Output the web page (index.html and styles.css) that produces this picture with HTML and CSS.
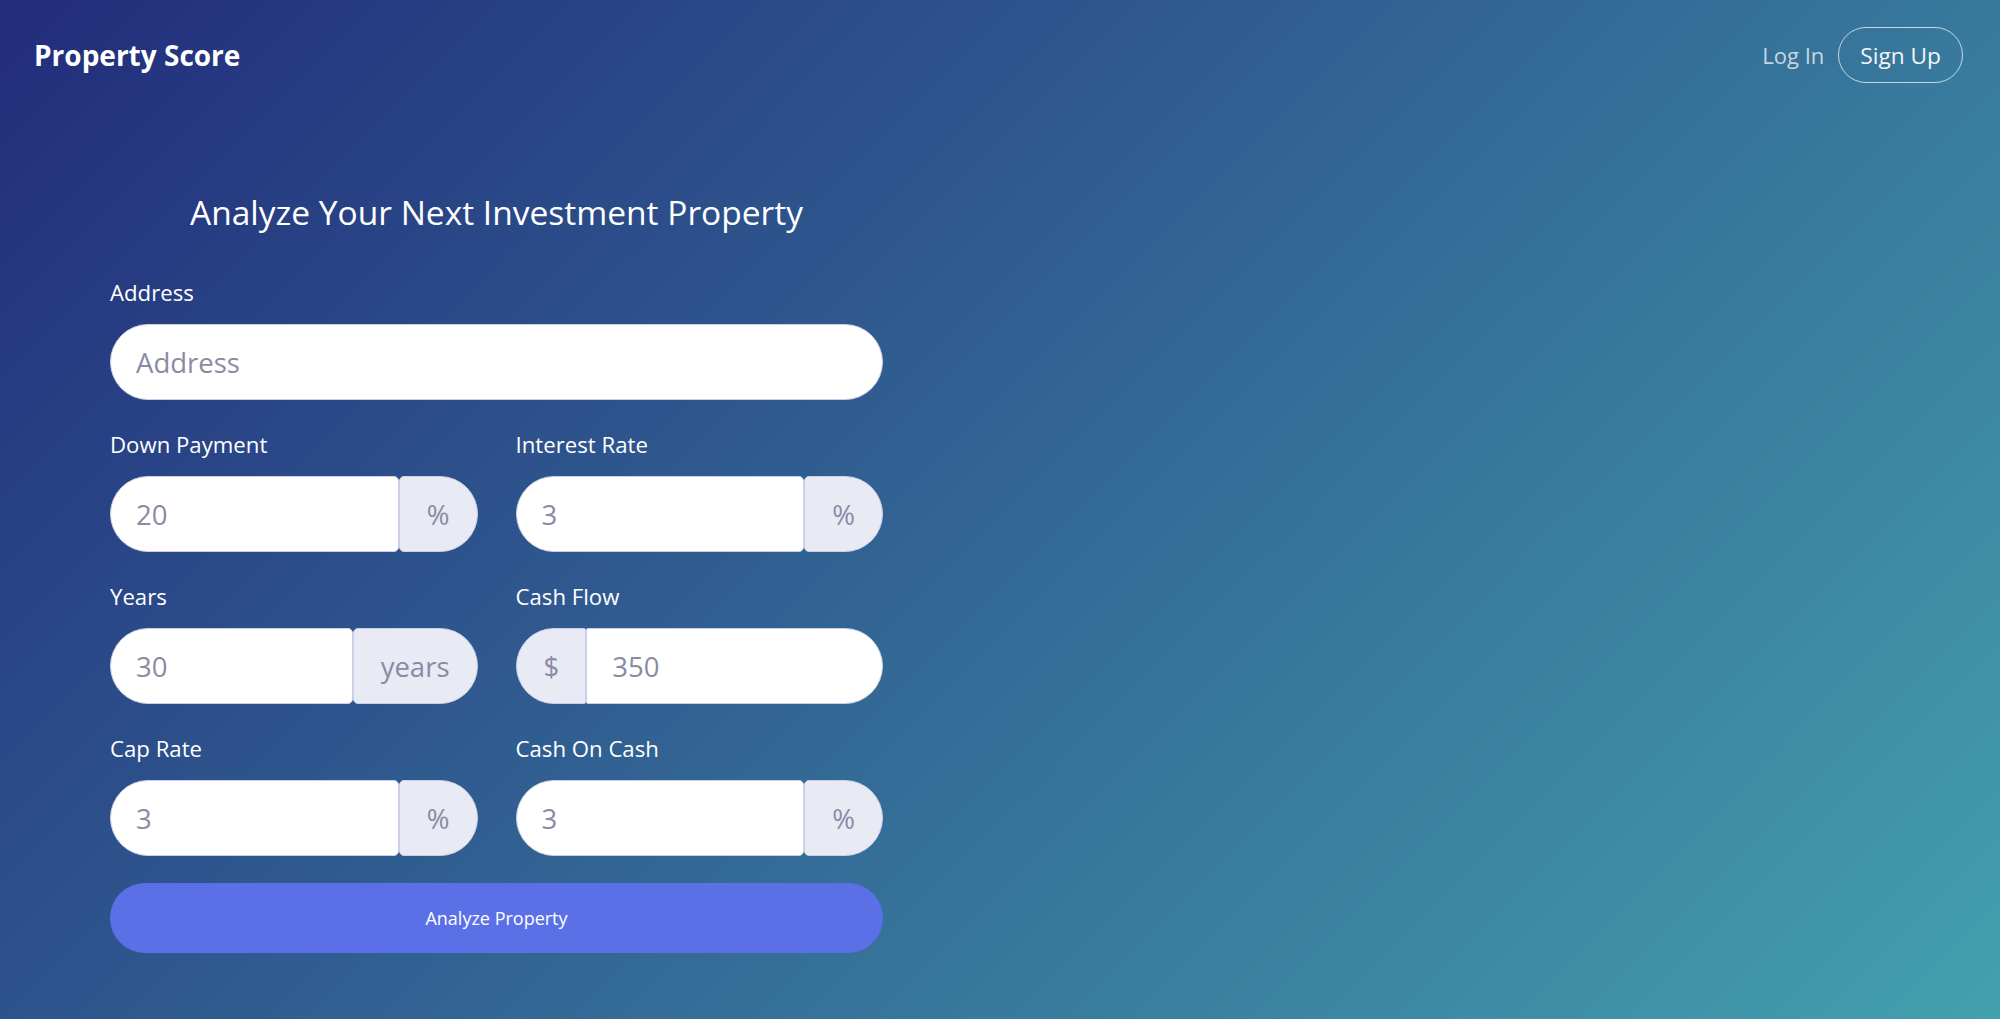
FILE: index.html
```html
<!DOCTYPE html>
<html lang="en">
<head>
<meta charset="utf-8">
<title>Property Score</title>
<link rel="stylesheet" href="styles.css">
</head>
<body>
<header class="topbar">
  <div class="brand">Property Score</div>
  <nav class="nav">
    <a class="nav-link" href="#">Log In</a>
    <a class="nav-btn" href="#">Sign Up</a>
  </nav>
</header>

<main class="main">
  <section class="panel">
    <h1 class="title">Analyze Your Next Investment Property</h1>
    <form class="form">
      <div class="field field-wide">
        <label class="label">Address</label>
        <div class="group">
          <input class="control control-full" type="text" size="1" placeholder="Address">
        </div>
      </div>

      <div class="field">
        <label class="label">Down Payment</label>
        <div class="group">
          <input class="control control-left" type="text" size="1" placeholder="20">
          <span class="addon addon-right">%</span>
        </div>
      </div>

      <div class="field">
        <label class="label">Interest Rate</label>
        <div class="group">
          <input class="control control-left" type="text" size="1" placeholder="3">
          <span class="addon addon-right">%</span>
        </div>
      </div>

      <div class="field">
        <label class="label">Years</label>
        <div class="group">
          <input class="control control-left" type="text" size="1" placeholder="30">
          <span class="addon addon-right">years</span>
        </div>
      </div>

      <div class="field">
        <label class="label">Cash Flow</label>
        <div class="group">
          <span class="addon addon-left">$</span>
          <input class="control control-right" type="text" size="1" placeholder="350">
        </div>
      </div>

      <div class="field">
        <label class="label">Cap Rate</label>
        <div class="group">
          <input class="control control-left" type="text" size="1" placeholder="3">
          <span class="addon addon-right">%</span>
        </div>
      </div>

      <div class="field">
        <label class="label">Cash On Cash</label>
        <div class="group">
          <input class="control control-left" type="text" size="1" placeholder="3">
          <span class="addon addon-right">%</span>
        </div>
      </div>
    </form>
    <button class="submit" type="button">Analyze Property</button>
  </section>
</main>
</body>
</html>
```

FILE: styles.css
```css
* {
  box-sizing: border-box;
}

html,
body {
  margin: 0;
  padding: 0;
}

body {
  min-height: 1019px;
  font-family: "Open Sans", "Noto Sans", sans-serif;
  color: #ffffff;
  background: linear-gradient(135deg, #222c7b 0%, #43a0ae 100%);
}

.topbar {
  display: flex;
  justify-content: space-between;
  align-items: center;
  padding: 27px 37px 0 34px;
}

.brand {
  font-size: 28px;
  font-weight: 700;
  line-height: 56px;
  color: #ffffff;
}

.nav {
  display: flex;
  align-items: center;
  gap: 14px;
}

.nav-link {
  font-size: 22px;
  color: rgba(255, 255, 255, 0.72);
  text-decoration: none;
}

.nav-btn {
  display: flex;
  align-items: center;
  height: 56px;
  padding: 0 21px;
  border: 1.5px solid rgba(255, 255, 255, 0.7);
  border-radius: 28px;
  font-size: 22.7px;
  color: #f3f5f9;
  text-decoration: none;
}

.main {
  padding-left: 110px;
}

.panel {
  width: 773px;
}

.title {
  margin: 106px 0 43px;
  font-size: 33.5px;
  font-weight: 400;
  line-height: 46px;
  text-align: center;
  color: #ffffff;
}

.form {
  display: grid;
  grid-template-columns: minmax(0, 1fr) minmax(0, 1fr);
  column-gap: 38px;
  row-gap: 30px;
}

.field {
  min-width: 0;
}

.field-wide {
  grid-column: 1 / -1;
}

.label {
  display: block;
  margin-bottom: 16px;
  font-size: 22.2px;
  line-height: 30px;
  color: #ffffff;
}

.group {
  display: flex;
  height: 76px;
}

.control {
  flex: 1 1 0;
  width: 0;
  min-width: 0;
  height: 100%;
  padding: 0 25px;
  border: 1px solid #cdd0e4;
  background: #ffffff;
  font-family: inherit;
  font-size: 27.5px;
  color: #8a8ba3;
  outline: none;
}

.control::placeholder {
  color: #8a8ba3;
  opacity: 1;
}

.control-full {
  border-radius: 38px;
}

.control-left {
  border-radius: 38px 5px 5px 38px;
}

.control-right {
  border-radius: 2px 38px 38px 2px;
}

.addon {
  display: flex;
  flex: 0 0 auto;
  align-items: center;
  justify-content: center;
  height: 100%;
  padding: 0 27px;
  border: 1px solid #cdd0e4;
  background: #e8eaf4;
  font-size: 27.5px;
  color: #8a8ba3;
}

.addon-right {
  border-radius: 5px 38px 38px 5px;
}

.addon-left {
  padding: 0 26px 0 27px;
  border-radius: 38px 2px 2px 38px;
}

.submit {
  display: block;
  width: 100%;
  height: 70px;
  margin-top: 27px;
  border: none;
  border-radius: 35px;
  background: #5b70e7;
  font-family: inherit;
  font-size: 18px;
  color: #ffffff;
  cursor: pointer;
}
```
